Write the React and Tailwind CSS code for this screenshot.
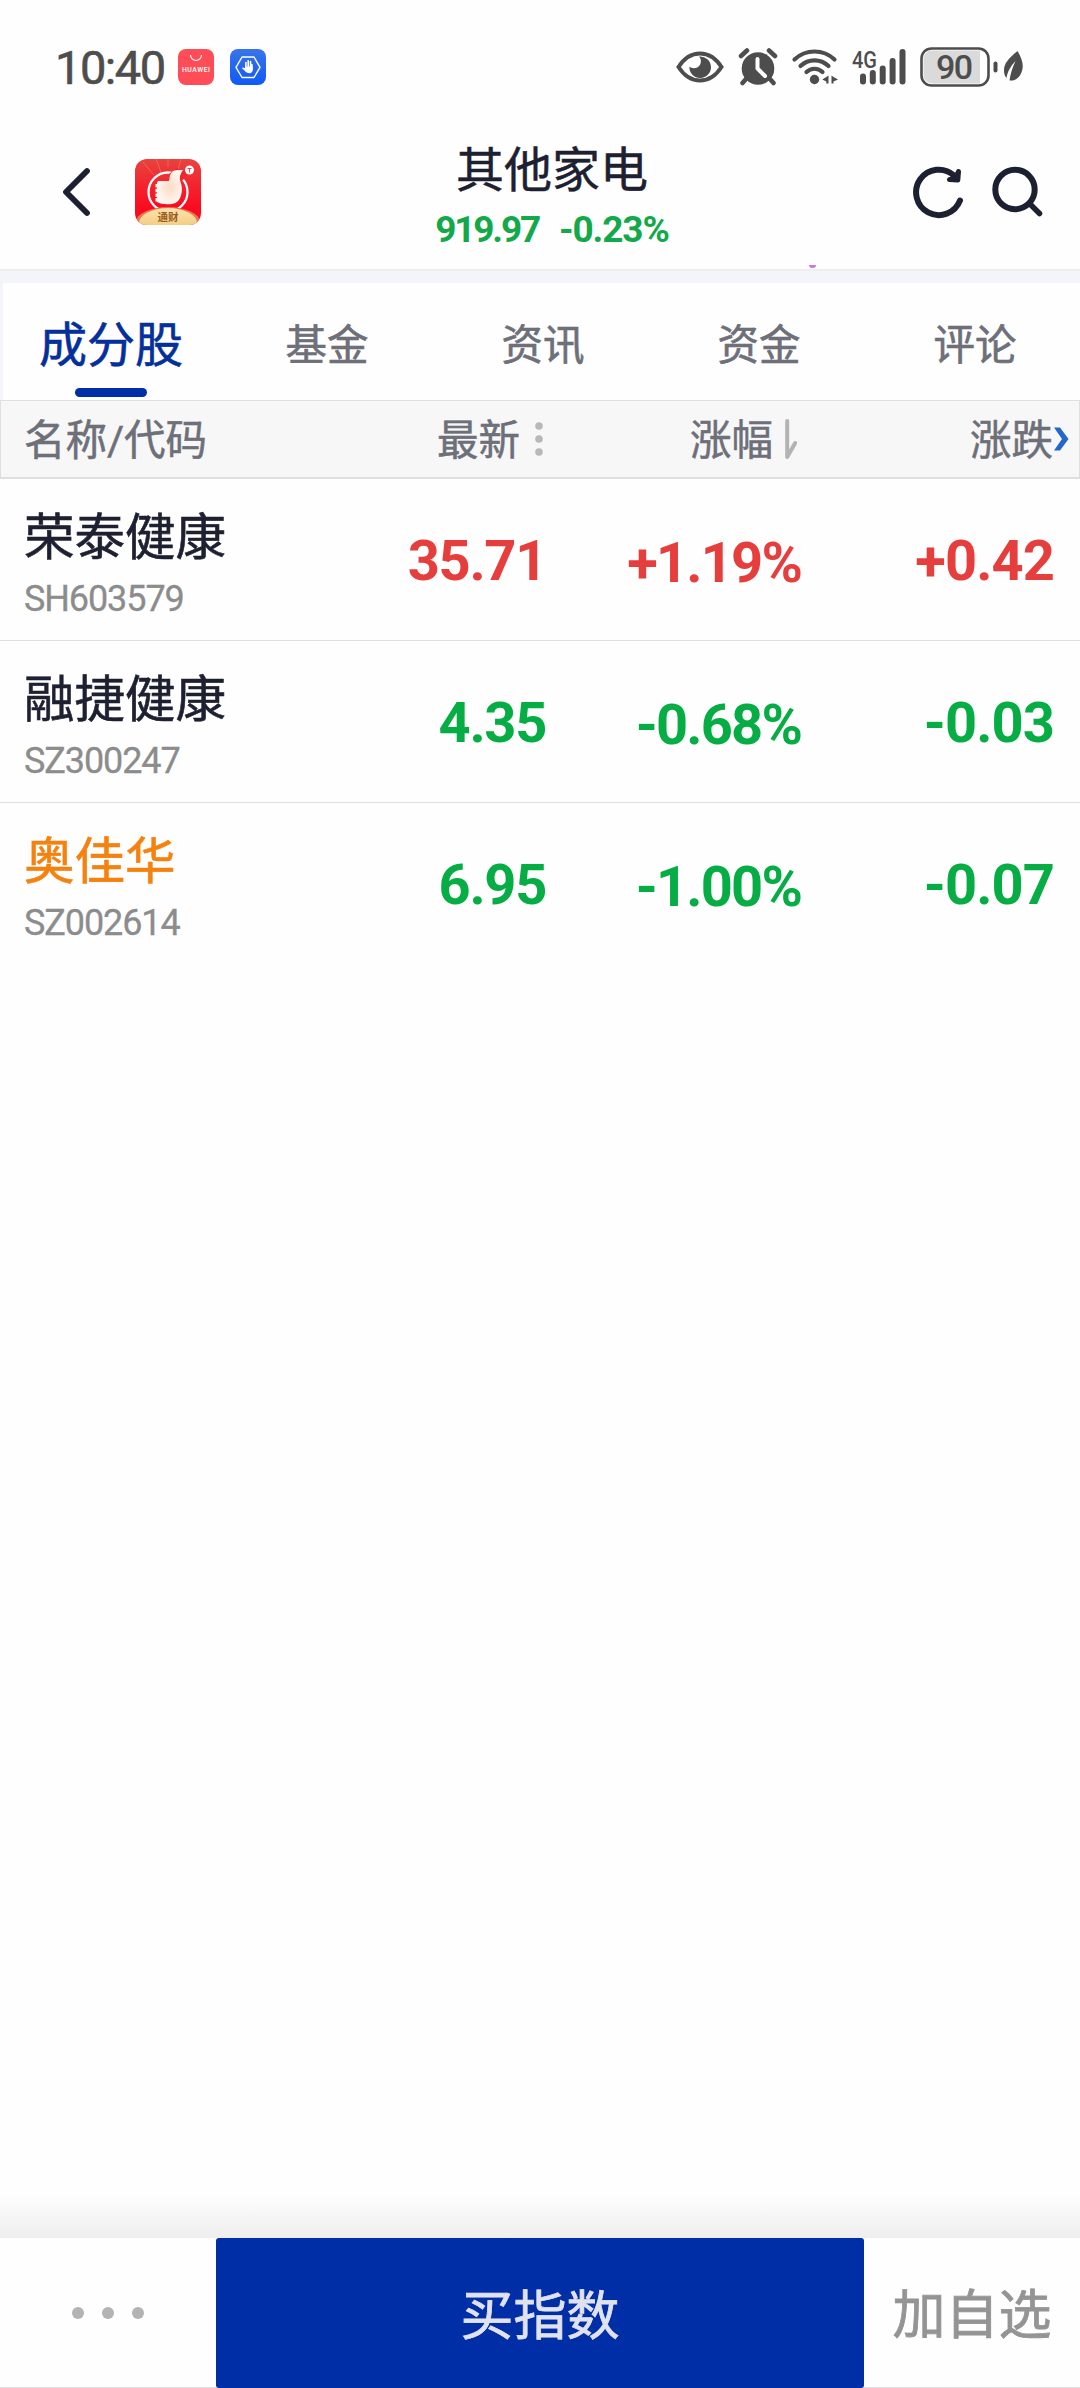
import React, { useState } from 'react';

const tabs = ['成分股', '基金', '资讯', '资金', '评论'];

const stocks = [
  { name: '荣泰健康', code: 'SH603579', price: '35.71', percent: '+1.19%', change: '+0.42', up: true },
  { name: '融捷健康', code: 'SZ300247', price: '4.35', percent: '-0.68%', change: '-0.03', up: false },
  { name: '奥佳华', code: 'SZ002614', price: '6.95', percent: '-1.00%', change: '-0.07', up: false, marked: true },
];

const StatusBar = () => (
  <div className="flex h-[134px] items-center pl-[55px] text-[#4d4d4d]">
    <span className="w-[123px] text-[47px] leading-none tracking-[-1.500px] [-webkit-text-stroke:0.6px]">10:40</span>
    {/* Notification icons */}
    <svg className="h-9 w-9" viewBox="0 0 36 36">
      <rect width="36" height="36" rx="8" fill="#ff4d57" />
      <path d="M12.5 6a5.5 5.5 0 0 0 11 0" fill="none" stroke="#fff" strokeWidth="1.1" />
      <text x="18" y="23" textAnchor="middle" textLength="28" fontSize="6.8" fontWeight="500" fill="#fff">HUAWEI</text>
    </svg>
    <svg className="ml-4 h-9 w-9" viewBox="0 0 36 36">
      <defs>
        <linearGradient id="shield" x1="0" y1="0" x2="0" y2="1">
          <stop offset="0" stopColor="#3a74ea" />
          <stop offset="1" stopColor="#0f59f5" />
        </linearGradient>
      </defs>
      <rect width="36" height="36" rx="8" fill="url(#shield)" />
      <path d="M12 8h12l6 10.3-6 10.2H12L6 18.300z" fill="none" stroke="#fff" strokeWidth="1.4" strokeLinejoin="round" />
      <path d="M15.900 20v-6.500M18.200 19v-7.200M20.500 19v-6.500M21.900 20.500v-5" stroke="#fff" strokeWidth="1.6" strokeLinecap="round" />
      <path d="M15.100 17.500h7.600v3.500c0 2-1.200 3.200-3.400 3.200-2 0-3.200-.7-4.300-2.100L12 19.200c.6-.9 1.700-.8 3.100.4z" fill="#fff" />
    </svg>

    <svg className="ml-[410px] h-10 w-12" viewBox="0 0 48 40">
      <path d="M2.500 20C8 11.500 15 6.500 24 6.500S40 11.500 45.500 20C40 28.500 33 33.500 24 33.500S8 28.500 2.500 20z" fill="none" stroke="currentColor" strokeWidth="4" />
      <path d="M23 9.500a10.800 10.800 0 1 1-9.600 10.300c3 2.500 9.500 1.700 11-2.800 1-3 .5-5.500-1.400-7.500z" fill="currentColor" />
    </svg>
    <svg className="ml-[14px] h-10 w-10" viewBox="0 0 40 40">
      <circle cx="20" cy="21.500" r="16.300" fill="currentColor" />
      <path d="M3 9l6-5.500M37 9l-6-5.500M8 32l-3.500 4M32 32l3.500 4" stroke="currentColor" strokeWidth="4.500" strokeLinecap="round" />
      <path d="M19.500 12v9.500l7.500 7.500" fill="none" stroke="#fff" strokeWidth="4" strokeLinecap="round" strokeLinejoin="round" />
    </svg>
    <svg className="ml-[13px] h-10 w-12" viewBox="0 0 48 40">
      <g fill="none" stroke="currentColor" strokeWidth="4.200" strokeLinecap="round">
        <path d="M3.500 12.500a29 29 0 0 1 40 0" />
        <path d="M9.500 19a20 20 0 0 1 28 0" />
        <path d="M15.500 25a11.500 11.500 0 0 1 16 0" />
      </g>
      <circle cx="23.500" cy="32.500" r="4.700" fill="currentColor" />
      <path d="M37.500 28.500v8h-2.200v-2l-4-2 4-2.500zM40.500 28.500v8h2v-2l4.500-2-4.500-2.500z" fill="currentColor" />
    </svg>
    <svg className="ml-[11px] h-12 w-14" viewBox="-2 -4 56 48">
      <text x="0" y="21" textLength="25" lengthAdjust="spacingAndGlyphs" fontSize="23" fontWeight="500" fill="currentColor">4G</text>
      <path d="M11 29.500v5M20.800 26v8.500M30.700 21.500v13M40.600 14v20.500M50.500 5v29.500" stroke="currentColor" strokeWidth="6" strokeLinecap="round" />
    </svg>
    <svg className="ml-[14px] h-10 w-[79px]" viewBox="0 0 79 40">
      <rect x="1.500" y="1.500" width="67" height="37" rx="10" fill="#fff" stroke="currentColor" strokeWidth="2.600" />
      <path d="M12 3.500h48v33H12a8.500 8.500 0 0 1-8.500-8.500V12A8.500 8.500 0 0 1 12 3.500z" fill="#dadada" />
      <path d="M75.500 16.500v7" stroke="currentColor" strokeWidth="4" strokeLinecap="round" />
      <text x="34.500" y="32" textAnchor="middle" textLength="37" fontSize="34" fontWeight="500" fill="currentColor">90</text>
    </svg>
    <svg className="ml-[5px] h-10 w-5" viewBox="0 0 20 40">
      <path d="M13.500 4C4 12 0 16.500 0 23.500c0 3 .8 5.500 2.500 7.500C3.500 25 6 20 11.500 14 8.500 20.500 6.500 26 5.500 33.500 12 34 17 29.500 18.500 22 19.500 16 17.500 11 13.500 4z" fill="currentColor" />
    </svg>
  </div>
);

const AppLogo = () => (
  <svg className="h-[66px] w-[66px]" viewBox="0 0 66 66">
    <defs>
      <linearGradient id="logoRed" x1="0" y1="0" x2="0" y2="1">
        <stop offset="0" stopColor="#e94340" />
        <stop offset=".75" stopColor="#fb0a20" />
      </linearGradient>
      <radialGradient id="thumb">
        <stop offset="0" stopColor="#fbdcc8" />
        <stop offset="1" stopColor="#fff6ee" />
      </radialGradient>
      <linearGradient id="gold" x1="0" y1="0" x2="0" y2="1">
        <stop offset="0" stopColor="#fae3ae" />
        <stop offset="1" stopColor="#efbd68" />
      </linearGradient>
      <clipPath id="logoClip">
        <rect width="66" height="66" rx="12" />
      </clipPath>
    </defs>
    <g clipPath="url(#logoClip)">
      <rect width="66" height="66" fill="url(#logoRed)" />
      <path d="M21 0l5 13M46 0l-3 11M8 3l11 13M33 0v8" stroke="#f4755f" strokeWidth="1" opacity=".7" />
      <circle cx="33" cy="33" r="19.500" fill="none" stroke="#fff" strokeWidth="2.300" />
      <path d="M34 15l7-6 13 5-8 9z" fill="#f3242d" />
      <path d="M25 22h9c1-3 0-7 4-10 3-1.500 7-1 10-1-3 4-4 8-2.500 12 2 5 2 11-.5 16-2 5-7 6.500-13 6.300-4 0-7-1-10-2.300V24c0-1.500 1-2 3-2z" fill="url(#thumb)" />
      <path d="M22 25v18" stroke="#fff6ee" strokeWidth="3" strokeDasharray="3.500 1.200" />
      <circle cx="54.500" cy="11" r="4.500" fill="#fff" />
      <path d="M52.500 9.500h4M54.500 9.500v4" stroke="#f04a48" strokeWidth="1.200" />
      <ellipse cx="33" cy="63" rx="32" ry="15" fill="#e77a4d" />
      <ellipse cx="33" cy="64" rx="29" ry="15" fill="url(#gold)" />
      <text x="33" y="62" textAnchor="middle" fontSize="10.500" fontWeight="700" fill="#9a5b1c">通财</text>
    </g>
  </svg>
);

const Header = () => (
  <div className="flex h-[137px] items-start border-b-2 border-[#eeeeee] text-[#1d2030]">
    <div className="flex w-[360px] pt-[25px] pl-[60px]">
      <svg className="h-[66px] w-[34px]" viewBox="0 0 34 66">
        <path d="M27 12L6 33l21 21" fill="none" stroke="currentColor" strokeWidth="5.800" strokeLinecap="round" strokeLinejoin="round" />
      </svg>
      <div className="ml-[41px]">
        <AppLogo />
      </div>
    </div>
    <div className="flex w-[384px] flex-col items-center pt-[6px]">
      <h1 className="text-[48px] leading-[62px] [-webkit-text-stroke:0.5px]">其他家电</h1>
      <p className="flex gap-[20px] text-[37px] leading-[56px] font-bold text-[#13a94b]">
        <span className="tracking-[-2.200px]">919.97</span>
        <span className="tracking-[-1.100px]">-0.23%</span>
      </p>
    </div>
    <div className="flex flex-1 pt-[29px] pl-[168px]">
      <svg className="h-[58px] w-[54px]" viewBox="0 0 54 58">
        <path d="M48 37.500A22.700 22.700 0 1 1 42 12.500" fill="none" stroke="currentColor" strokeWidth="6" strokeLinecap="round" />
        <path d="M46.500 8.500L45.800 17 37.500 16.500l6-2z" fill="currentColor" stroke="currentColor" strokeWidth="5" strokeLinejoin="round" />
      </svg>
      <svg className="ml-[26px] h-[58px] w-[54px]" viewBox="0 0 54 58">
        <circle cx="23" cy="26.500" r="19.700" fill="none" stroke="currentColor" strokeWidth="6" />
        <path d="M37.500 40.500l10 10" stroke="currentColor" strokeWidth="5.500" strokeLinecap="round" />
      </svg>
    </div>
  </div>
);

const Tabs = () => {
  const [active, setActive] = useState(0);

  return (
    <div className="flex h-[129px] overflow-hidden border-t-[12px] border-l-[3px] border-[#f4f5fa]">
      {tabs.map((tab, index) => (
        <button
          key={tab}
          onClick={() => setActive(index)}
          className={`flex w-[216px] shrink-0 flex-col items-center pt-[30px] leading-[66px] [-webkit-text-stroke:0.6px] ${active === index
            ? 'text-[48px] text-[#052f9b]'
            : 'text-[41.500px] text-[#6d6f79]'
            }`}
        >
          {tab}
          {active === index && <span className="mt-[9px] h-[9px] w-[72px] rounded-full bg-[#002ea6]" />}
        </button>
      ))}
    </div>
  );
};

const TableHead = () => (
  <div className="flex h-[79px] items-center border border-b-2 border-[#dfdfdf] bg-[#f7f7f7] pl-[23px] text-[41.500px] text-[#6d6f79]">
    <span className="w-[413px] pt-1 [-webkit-text-stroke:0.5px]">名称/代码</span>
    <span className="pt-1 [-webkit-text-stroke:0.5px]">最新</span>
    <svg className="ml-[15px] h-10 w-2" viewBox="0 0 8 40">
      <g fill="#b8b8b8">
        <circle cx="4" cy="7" r="3.800" />
        <circle cx="4" cy="20" r="3.800" />
        <circle cx="4" cy="33" r="3.800" />
      </g>
    </svg>
    <span className="ml-[147px] pt-1 [-webkit-text-stroke:0.5px]">涨幅</span>
    <svg className="ml-3 h-10 w-3" viewBox="0 0 12 40">
      <path d="M2.200 2v36l8-14" fill="none" stroke="#b3b3b3" strokeWidth="4" strokeLinecap="round" strokeLinejoin="round" />
    </svg>
    <span className="ml-[173px] pt-1 [-webkit-text-stroke:0.5px]">涨跌</span>
    <svg className="h-6 w-4 shrink-0" viewBox="0 0 16 24">
      <path d="M1 .5h6l8.500 11.500L7 23.500H1L9 12z" fill="#2267cb" />
    </svg>
  </div>
);

const StockRow = ({ stock }) => (
  <div className="flex h-[162px] items-start border-b border-[#dfdfdf] pl-6 last:border-b-0">
    <div className="w-[300px] pt-[23px]">
      <p className={`text-[50.500px] leading-[72px] [-webkit-text-stroke:0.6px] ${stock.marked ? 'text-[#f5820f]' : 'text-[#1d2030]'}`}>{stock.name}</p>
      <p className="text-[36px] leading-[50px] tracking-[-1.100px] text-[#8c8c8c] [-webkit-text-stroke:0.3px]">{stock.code}</p>
    </div>
    <div className={`flex pt-[52px] text-[56px] leading-[60px] font-bold ${stock.up ? 'text-[#e63d3d]' : 'text-[#06ad44]'}`}>
      <span className="w-[222px] text-right tracking-[-1.300px]">{stock.price}</span>
      <span className="w-[255px] pt-[2px] text-right tracking-[-1.800px]">{stock.percent}</span>
      <span className="w-[253px] text-right tracking-[-0.900px]">{stock.change}</span>
    </div>
  </div>
);

const BottomBar = () => (
  <div>
    <div className="h-12 bg-linear-to-b from-white to-[#eeeeee]" />
    <div className="flex h-[150px] border-b border-[#e0e0e0]">
      <button className="flex w-[216px] items-center justify-center gap-[18px]">
        <span className="h-3 w-3 rounded-full bg-[#b3b3b3]" />
        <span className="h-3 w-3 rounded-full bg-[#b3b3b3]" />
        <span className="h-3 w-3 rounded-full bg-[#b3b3b3]" />
      </button>
      <button className="h-[150px] w-[648px] rounded-[3px] bg-[#002ea6] pt-[9px] text-[53px] text-[#e0e3ee] [-webkit-text-stroke:0.8px]">买指数</button>
      <button className="w-[216px] pt-[9px] text-[53px] text-[#949494] [-webkit-text-stroke:0.8px]">加自选</button>
    </div>
  </div>
);

const App = () => {
  return (
    <div className="flex h-[2388px] w-[1080px] flex-col overflow-hidden bg-[#fefefe] font-[Roboto,'Noto_Sans_CJK_SC',sans-serif]">
      <StatusBar />
      <div className="relative">
        <Header />
        {/* Tip of the chart handle behind the sticky header */}
        <span className="absolute bottom-[3px] left-[809px] h-[3px] w-[7px] rounded-b-full bg-[#c97bd0]" />
      </div>
      <Tabs />
      <TableHead />
      <div className="flex-1">
        {stocks.map((stock) => (
          <StockRow key={stock.code} stock={stock} />
        ))}
      </div>
      <BottomBar />
    </div>
  );
};

export default App;
